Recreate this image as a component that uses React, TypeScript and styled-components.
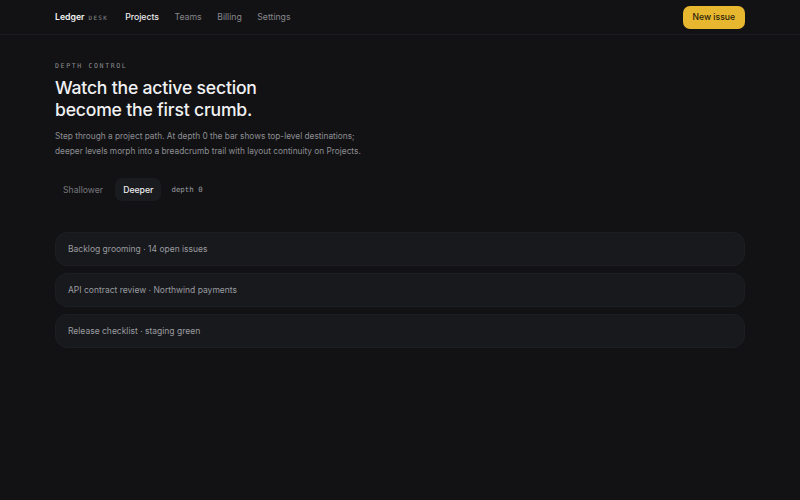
import styled, { createGlobalStyle } from 'styled-components';

const Global = createGlobalStyle`
  html, body { margin: 0; padding: 0; background: #121214; }
  body { font-family: Inter, "Noto Sans", sans-serif; color: #e8e8ea; -webkit-font-smoothing: antialiased; }
  * { box-sizing: border-box; }
`;

const Page = styled.div`
  min-height: 500px;
  background: #121214;
`;

const TopBar = styled.header`
  height: 35px;
  padding: 0 55px;
  display: flex;
  align-items: center;
  border-bottom: 1px solid #1b1c1f;
`;

const Brand = styled.div`
  display: flex;
  align-items: baseline;
  gap: 4px;
  margin-right: 17px;
  font-size: 8.7px;
  font-weight: 600;
  color: #f2f2f3;
`;

const BrandTag = styled.span`
  font-family: "DejaVu Sans Mono", monospace;
  font-size: 6px;
  letter-spacing: 1.3px;
  color: #8a8b90;
  font-weight: 400;
`;

const Nav = styled.nav`
  display: flex;
  gap: 15.5px;
  flex: 1;
`;

const NavLink = styled.a<{ $active?: boolean }>`
  font-size: 8.7px;
  font-weight: ${p => (p.$active ? 500 : 400)};
  color: ${p => (p.$active ? '#ececee' : '#86878c')};
  text-decoration: none;
`;

const PrimaryButton = styled.button`
  height: 23px;
  padding: 0 10px;
  border: none;
  border-radius: 7px;
  background: #e8b730;
  color: #2a2109;
  font-family: inherit;
  font-size: 8.6px;
  font-weight: 500;
`;

const Main = styled.main`
  padding: 27px 55px 0;
`;

const Eyebrow = styled.div`
  font-family: "DejaVu Sans Mono", monospace;
  font-size: 6.6px;
  letter-spacing: 1.6px;
  color: #8b8c90;
  margin-bottom: 7px;
`;

const Title = styled.h1`
  margin: 0;
  font-size: 17.6px;
  line-height: 22px;
  font-weight: 500;
  letter-spacing: -0.2px;
  color: #f1f1f3;
`;

const Lead = styled.p`
  margin: 8px 0 0;
  font-size: 8.3px;
  line-height: 15px;
  color: #8d8e93;
  max-width: 318px;
`;

const Controls = styled.div`
  display: flex;
  align-items: center;
  gap: 4px;
  margin-top: 19px;
`;

const Toggle = styled.button<{ $active?: boolean }>`
  height: 23px;
  padding: 0 8px;
  border: none;
  border-radius: 7px;
  background: ${p => (p.$active ? '#1a1b1e' : 'transparent')};
  color: ${p => (p.$active ? '#ececee' : '#77787d')};
  font-family: inherit;
  font-size: 8.7px;
  font-weight: ${p => (p.$active ? 500 : 400)};
`;

const DepthLabel = styled.span`
  margin-left: 6px;
  font-family: "DejaVu Sans Mono", monospace;
  font-size: 7.4px;
  color: #9a9ba0;
`;

const List = styled.div`
  margin-top: 31px;
  display: flex;
  flex-direction: column;
  gap: 7px;
`;

const Row = styled.div`
  height: 34px;
  padding: 0 12px;
  display: flex;
  align-items: center;
  border-radius: 12px;
  background: #18191c;
  border: 1px solid #1d1e21;
  font-size: 8.5px;
  color: #9a9ba0;
`;

const rows = [
  'Backlog grooming · 14 open issues',
  'API contract review · Northwind payments',
  'Release checklist · staging green',
];

export default function App() {
  return (
    <Page>
      <Global />
      <TopBar>
        <Brand>
          Ledger <BrandTag>DESK</BrandTag>
        </Brand>
        <Nav>
          <NavLink $active>Projects</NavLink>
          <NavLink>Teams</NavLink>
          <NavLink>Billing</NavLink>
          <NavLink>Settings</NavLink>
        </Nav>
        <PrimaryButton>New issue</PrimaryButton>
      </TopBar>
      <Main>
        <Eyebrow>DEPTH CONTROL</Eyebrow>
        <Title>
          Watch the active section
          <br />
          become the first crumb.
        </Title>
        <Lead>
          Step through a project path. At depth 0 the bar shows top-level destinations; deeper levels
          morph into a breadcrumb trail with layout continuity on Projects.
        </Lead>
        <Controls>
          <Toggle>Shallower</Toggle>
          <Toggle $active>Deeper</Toggle>
          <DepthLabel>depth 0</DepthLabel>
        </Controls>
        <List>
          {rows.map(r => (
            <Row key={r}>{r}</Row>
          ))}
        </List>
      </Main>
    </Page>
  );
}
